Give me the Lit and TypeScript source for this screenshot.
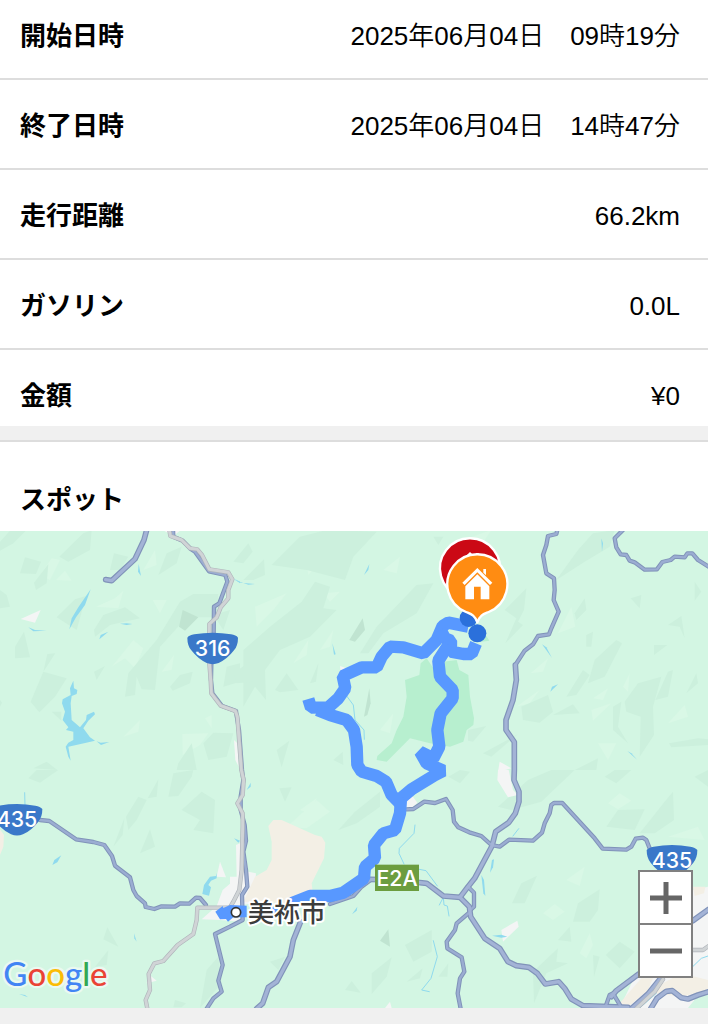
import { LitElement, html, svg, css } from "lit";
import { customElement } from "lit/decorators.js";

// The map is drawn in a 2124 x 1431 space, split in six sheets.
const SHEETS = {
  nw: [0, -3],
  n: [690, -3],
  ne: [1404, -3],
  sw: [0, 717],
  s: [690, 717],
  se: [1404, 717],
} as const;
type Sheet = keyof typeof SHEETS;
type Part = [Sheet, string];

const line = (...parts: Part[]) =>
  parts
    .map(([sheet, points]) =>
      points
        .split(" ")
        .map((p) => {
          const [x, y] = p.split(",").map(Number);
          return `${x + SHEETS[sheet][0]},${y + SHEETS[sheet][1]}`;
        })
        .join(" "),
    )
    .join(" ");

const shift = (sheet: Sheet) => `translate(${SHEETS[sheet][0]} ${SHEETS[sheet][1]})`;

const darkSlopes: Part[] = [
  ["nw", "75,82 123,95 108,132 60,130"],
  ["nw", "0,35 30,2 78,2 40,40 0,62"],
  ["nw", "178,80 250,10 275,0 270,60 205,95"],
  ["nw", "102,158 145,102 140,160 108,180"],
  ["nw", "170,262 225,208 258,198 230,300"],
  ["nw", "282,300 310,255 375,232 420,265 330,285 285,320"],
  ["nw", "0,180 20,195 30,230 0,235"],
  ["nw", "45,385 45,350 72,305 90,382"],
  ["nw", "92,515 130,425 200,445 165,500 118,547"],
  ["nw", "142,372 166,370 130,425"],
  ["nw", "282,425 315,408 290,450"],
  ["nw", "375,500 385,430 470,330 540,215 580,192 655,192 650,262 560,262 480,350 465,480 425,478 410,440 405,495"],
  ["nw", "510,470 540,435 578,425 570,460 518,482"],
  ["nw", "330,120 342,70 385,80 360,120"],
  ["nw", "475,135 500,70 545,50 530,100"],
  ["nw", "155,545 184,545 184,572"],
  ["nw", "0,510 6,518 0,530"],
  ["nw", "680,410 720,400 720,455 670,470"],
  ["nw", "535,700 575,640 590,720 530,720"],
  ["nw", "610,640 640,608 700,610 680,680 625,690"],
  ["nw", "100,715 140,695 172,720"],
  ["nw", "640,255 690,240 670,300"],
  ["n", "125,105 210,20 290,0 440,5 370,80 345,150 230,120"],
  ["n", "10,95 55,40 68,65 40,100"],
  ["n", "40,150 102,88 105,135 70,150"],
  ["n", "40,360 120,290 215,215 255,155 300,170 280,235 320,240 240,320 150,360 105,420 108,510 75,470 40,530"],
  ["n", "10,430 60,395 70,455 20,460"],
  ["n", "390,370 440,290 560,165 610,160 560,250 460,310 415,370"],
  ["n", "135,480 170,430 205,480 150,487"],
  ["n", "240,460 265,400 258,455"],
  ["n", "140,660 178,632 155,712"],
  ["n", "310,690 338,665 340,705"],
  ["n", "610,20 640,20 625,45"],
  ["ne", "110,240 175,175 168,240 150,275 165,285 112,340 145,265"],
  ["ne", "265,150 330,60 375,10 440,0 425,50 350,95"],
  ["ne", "320,250 350,205 355,240 325,270"],
  ["ne", "355,315 375,305 370,350 355,350"],
  ["ne", "295,500 345,420 365,435 325,495"],
  ["ne", "360,460 380,390 445,330 462,340 410,440"],
  ["ne", "160,530 240,495 255,545 215,578 165,570"],
  ["ne", "255,555 315,523 335,550"],
  ["ne", "435,530 460,515 450,590 480,640 435,600"],
  ["ne", "470,515 510,460 580,440 555,530 558,615 515,680 518,560 475,545"],
  ["ne", "562,510 600,425 615,420 600,500"],
  ["ne", "600,285 640,258 650,325 635,290"],
  ["ne", "488,205 520,195 515,235"],
  ["ne", "680,155 700,185 680,212"],
  ["ne", "558,345 598,345 558,375"],
  ["ne", "603,640 690,625 720,628 720,645 610,652"],
  ["ne", "0,600 55,588 15,635 0,632"],
  ["ne", "45,670 150,612 70,680"],
  ["ne", "320,720 390,685 385,720"],
  ["ne", "655,490 685,430 690,460"],
  ["sw", "85,25 110,0 175,0 120,38"],
  ["sw", "378,140 415,80 440,90 410,150 385,180"],
  ["sw", "340,230 373,145 368,195"],
  ["sw", "420,250 450,178 465,230"],
  ["sw", "545,120 605,65 645,90 640,190 580,180 600,150"],
  ["sw", "505,80 520,10 580,0 575,20 535,78"],
  ["sw", "443,85 475,28 470,80"],
  ["sw", "310,508 322,472 355,530"],
  ["sw", "285,590 325,540 320,585"],
  ["sw", "600,714 620,600 655,560 665,640"],
  ["sw", "525,690 558,700 545,712 520,712"],
  ["s", "148,55 185,52 165,95"],
  ["s", "325,180 375,125 450,65 450,110 380,160"],
  ["s", "525,525 605,480 605,545 550,575"],
  ["s", "425,610 485,562 470,620 425,672"],
  ["s", "345,660 365,633 392,668"],
  ["s", "120,575 165,560 145,600"],
  ["s", "530,635 578,595 570,625"],
  ["s", "625,620 655,580 652,620"],
  ["s", "655,20 690,0 720,5 690,40"],
  ["se", "90,110 180,30 250,0 320,0 220,95 130,120"],
  ["se", "415,170 450,120 530,118 500,180"],
  ["se", "515,190 590,95 615,65 618,150 560,190"],
  ["se", "132,400 160,340 207,317 170,400"],
  ["se", "315,455 330,400 395,358 390,420 365,455"],
  ["se", "413,555 455,515 500,545 455,595"],
  ["se", "195,605 270,535 265,575 300,580 235,610 198,700"],
  ["se", "375,555 395,560 378,620"],
  ["se", "410,20 440,0 490,0 445,40"],
  ["se", "680,20 720,0 720,50"],
  ["se", "270,510 305,470 310,515"],
];

const lightSlopes: Part[] = [
  ["nw", "120,135 155,85 180,90 150,150"],
  ["nw", "288,230 345,205 370,182 355,235"],
  ["nw", "168,150 195,122 215,152"],
  ["nw", "458,210 500,210 480,250"],
  ["nw", "335,410 400,330 430,355 405,415 375,385"],
  ["nw", "485,425 522,375 515,420"],
  ["nw", "547,612 625,610 600,645 548,675"],
  ["nw", "370,620 420,570 415,605"],
  ["nw", "430,120 465,60 470,105"],
  ["nw", "615,565 635,555 635,595"],
  ["n", "75,230 170,190 130,240 80,290"],
  ["n", "225,70 265,100 235,135"],
  ["n", "460,120 510,80 500,130"],
  ["n", "190,400 235,330 230,375"],
  ["n", "280,190 330,185 300,215"],
  ["n", "450,600 490,550 480,610"],
  ["n", "270,360 310,300 300,350"],
  ["ne", "270,310 310,230 322,290"],
  ["ne", "188,430 240,385 225,425"],
  ["ne", "145,530 215,480 185,520"],
  ["ne", "370,540 430,520 375,572"],
  ["ne", "375,505 420,475 405,510"],
  ["ne", "390,640 445,640 420,690"],
  ["ne", "600,580 650,525 660,560"],
  ["ne", "465,470 485,430 480,485"],
  ["ne", "0,25 70,0 50,30"],
  ["s", "170,170 260,90 300,125 230,175"],
  ["s", "210,120 260,85 240,130"],
  ["se", "295,330 350,290 335,348"],
  ["se", "225,430 260,402 290,425 255,450"],
  ["se", "420,100 455,70 490,92 450,118"],
  ["se", "335,550 365,490 375,525 355,565"],
  ["se", "600,200 690,170 710,210"],
];

const peaks: Part[] = [
  ["nw", "548,240 595,262 555,302 537,290"],
  ["n", "358,330 398,265 405,300 375,335"],
  ["n", "402,560 418,475 422,520 412,555"],
  ["s", "450,512 475,478 480,530"],
];

const paleGround: Part[] = [
  ["nw", "62,267 122,240 105,278"],
  ["nw", "492,2 540,2 520,18"],
  ["nw", "702,630 712,640 716,710 706,690"],
  ["n", "330,408 350,415 332,425"],
  ["ne", "95,695 130,715 90,725"],
  ["se", "90,0 122,0 135,60 150,75 120,82 88,30"],
  ["s", "530,80 545,75 562,98 545,115 528,110"],
  ["se", "100,480 148,452 152,470 105,515"],
  ["sw", "660,275 678,322 650,320"],
  ["sw", "605,448 650,408 668,360 720,315 720,455 660,450"],
  ["s", "0,320 20,320 18,225 40,215 55,305 78,310 72,400 0,410"],
  ["sw", "445,612 470,632 440,640"],
  ["s", "465,714 480,695 485,714"],
  ["se", "675,360 720,350 720,640 660,714 455,714 500,620 675,610"],
];

const sand: Part[] = [
  ["s", "115,168 130,150 155,150 255,195 275,200 286,218 282,265 245,340 248,365 190,385 170,400 40,395 75,320 110,300 125,270 125,215"],
  ["se", "675,350 712,350 708,370 680,378"],
  ["se", "455,700 520,625 555,625 540,660 480,710"],
  ["se", "585,640 640,610 720,630 720,660 640,680 560,670"],
  ["sw", "0,178 12,195 10,230 0,255"],
];

const park: Part[] = [
  ["n", "525,450 568,435 572,400 590,385 620,430 640,395 680,390 688,420 715,435 720,500 732,565 730,585 710,600 700,635 660,650 600,640 540,625 470,695 440,690 442,678 485,640 500,600 520,560 530,500"],
  ["ne", "40,335 55,318 64,332"],
];

const lakes: Part[] = [
  ["nw", "220,452 222,475 232,480 230,492 215,498 212,520 215,570 240,592 258,570 260,555 282,545 285,553 265,572 250,595 270,622 285,632 252,640 205,650 212,692 205,680 197,650 205,638 220,630 220,605 198,600 205,592 188,570 195,545 186,520 188,508 212,495 210,475"],
  ["nw", "290,634 302,638 328,636 303,645"],
  ["sw", "607,372 612,345 630,320 648,318 650,308 650,325 633,332 625,345 633,352 627,377"],
  ["nw", "208,298 215,265 235,232 272,178 255,225 228,262"],
  ["nw", "298,328 302,315 325,305"],
  ["nw", "416,102 423,138 414,125"],
  ["nw", "85,292 105,300 140,302 100,304"],
  ["nw", "360,281 380,280 397,282 380,285"],
  ["nw", "700,145 720,155 720,160"],
  ["n", "8,148 32,158 75,162 55,164"],
  ["n", "402,135 418,102 415,120"],
  ["n", "307,340 317,373 312,374"],
  ["ne", "400,25 405,40 402,65"],
  ["ne", "222,343 235,352 252,384"],
  ["ne", "247,485 252,470 270,463"],
  ["ne", "478,663 490,670 508,690"],
  ["sw", "157,285 163,270 184,256 172,277"],
  ["sw", "402,490 410,515 403,505"],
  ["sw", "57,672 75,675 84,682"],
  ["s", "50,60 62,38 62,50"],
  ["s", "366,433 382,410 380,422"],
  ["se", "66,308 72,270 78,268 75,292"],
  ["se", "40,315 48,330 52,378 46,370"],
  ["se", "72,497 100,494 118,500 100,503"],
  ["s", "12,205 30,212 25,218"],
];

const streams = [
  line(["s", "555,165 552,190 508,235 507,250 522,282"]),
  line(["s", "568,298 588,302 622,348"]),
  line(["s", "628,405 640,382 642,405 652,408 657,438"]),
  line(["s", "610,512 622,560 603,625 575,660 598,665"]),
  line(["n", "350,498 370,525 375,570 402,600 403,628"]),
  line(["sw", "74,68 75,105"]),
  line(["se", "135,198 152,176"]),
  line(["se", "515,714 565,670"]),
  line(["se", "672,592 700,565 720,558"]),
];

const roads = [
  line(["nw", "519,0 520,20 548,32 570,55 585,65 627,124 676,135 682,155 658,220 642,230 641,310 634,400 633,450 637,490 665,527 708,543"]),
  line(
    ["n", "18,545 27,600 36,720"],
    ["s", "40,30 32,80 32,120 44,165 48,212 40,245 48,300 52,350 36,375 38,450 0,470"],
    ["sw", "645,492 668,585 655,632 665,665 640,685 620,716"],
  ),
  line(["sw", "120,150 148,153 228,208 280,216 313,225 336,258 345,287 390,322 400,360 410,378 435,400 437,411 463,417 485,409 525,410 540,400 568,401 588,383 600,384 618,405"]),
  line(
    ["s", "530,118 550,117 583,95 615,99 648,87 668,120 672,155 685,172 718,187"],
    ["se", "40,198 70,225 95,230 123,209 195,212 222,188 230,160 245,130 250,105 258,99 283,99 380,205 404,236 475,239 490,230 503,206 525,203 535,210 545,235"],
  ),
  line(["ne", "268,0 265,12 240,18 235,45 225,75 235,130 258,145 260,180 257,210 272,245 250,295 243,313 210,318 195,343 170,362 142,405"]),
  line(["se", "0,350 18,368 18,410 5,422"]),
  line(["s", "715,430 680,460 675,480 650,515 652,535 695,562 703,605 690,625 683,670 692,716"]),
  line(["ne", "465,0 440,25 445,52 458,73 475,75 485,92 500,97 530,119 567,118 583,96 608,90 620,80 650,82 658,70 673,70 690,90 722,110"]),
  line(["s", "300,402 370,378 395,350 425,328"]),
  line(["se", "412,712 425,675 435,670 460,712"]),
];

const highways = [
  line(["nw", "440,0 432,30 405,87 335,152 317,149"]),
  line(["s", "212,455 190,510 180,560 140,635 115,652 98,700 80,716"]),
  line(
    ["s", "420,328 500,330 590,340 640,378 690,382 718,410"],
    ["se", "8,440 50,505 95,535 120,575 145,587 183,592 208,610 232,642 272,635 290,655 310,687 345,707 480,712"],
  ),
  line(
    ["ne", "142,405 145,450 135,510 114,570 114,600 139,636 139,720"],
    ["se", "138,30 153,65 153,95 142,130 122,158 83,185 72,228 20,325 0,350"],
    ["s", "690,382"],
  ),
  line(["se", "675,452 722,418"]),
  line(["se", "548,716 567,685 595,664 613,662 640,683 660,687 690,675 722,665"]),
  line(["se", "430,680 445,662 512,612"]),
  line(["se", "490,716 540,672 578,625"]),
];

const railways = [
  line(
    ["nw", "508,0 511,18 545,30 570,55 592,58 606,75 628,118 685,127 697,148 685,180 685,205 662,232 650,262 628,282 628,400 632,450 634,490 662,527 706,543"],
    ["n", "22,560 34,720"],
    ["s", "41,30 38,75 22,100 38,130 38,170 35,300 28,360 10,395"],
    ["sw", "690,412 660,413 592,413 590,450 580,492 533,525 490,573 463,580 446,612 450,660 437,690 442,716"],
  ),
  line(["se", "675,540 705,540 722,528"]),
  line(["se", "505,716 560,665 585,628"]),
];

const route = [
  line(["n", "235,507 243,533 295,532 325,505 346,475 338,438 395,412 440,412 455,380 480,350 520,352 580,370 620,330 638,288 655,278 715,290"]),
  line(["n", "632,300 645,325 663,332 663,365 700,372 725,372 738,340"]),
  line(
    ["n", "655,345 625,392 630,440 668,480 668,505 632,550 622,600 628,650 610,685 570,665 590,700 640,722"],
    ["s", "615,15 545,58 513,85 510,130 495,180 460,190 432,225 435,265 405,290 402,325 340,368 300,378 240,378 185,400"],
  ),
  line(["n", "262,540 300,555 350,570 372,600 380,650 382,705"], ["s", "395,5 440,18 468,35 485,75 510,100"]),
];

const house = svg`<g fill="#fff">
  <path d="M0 -48 L45 -4 L38 3 L0 -35 L-38 3 L-45 -4 Z"/>
  <path d="M0 -29 L36 7 V46 H10 V8 H-10 V46 H-36 V7 Z"/>
  <path d="M18 -45 H26 V-26 L18 -34 Z"/>
</g>`;

const pin = (x: number, y: number, color: string) => svg`
  <g transform="translate(${x} ${y})">
    <path d="M0 115 C-8 92 -20 90 -34 84 A90 90 0 1 1 34 84 C20 90 8 92 0 115 Z" fill=${color} stroke="#fff" stroke-width="7" stroke-linejoin="round"/>
    ${house}
  </g>`;

const shield = (sheet: Sheet, x: number, y: number, label: string) => svg`
  <g transform=${shift(sheet)}>
    <g transform="translate(${x} ${y})">
      <path d="M-76 14 Q-70 6 -55 4 Q0 -6 55 4 Q70 6 76 14 Q76 38 64 52 Q44 78 18 90 Q0 97 -18 90 Q-44 78 -64 52 Q-76 38 -76 14 Z" fill="#3a78c9"/>
      <text class="road-label" x="0" y="68" text-anchor="middle">${label}</text>
    </g>
  </g>`;

const polygons = (parts: Part[], fill: string) =>
  svg`<g fill=${fill}>${parts.map((p) => svg`<polygon points=${line(p)}/>`)}</g>`;
const polylines = (lines: string[], color: string, width: number, join = "round", cap = "round") =>
  svg`<g fill="none" stroke=${color} stroke-width=${width} stroke-linejoin=${join} stroke-linecap=${cap}>
    ${lines.map((l) => svg`<polyline points=${l}/>`)}
  </g>`;

@customElement("drive-map")
export class DriveMap extends LitElement {
  static styles = css`
    :host {
      display: block;
      position: relative;
    }
    .map {
      display: block;
      width: 100%;
      height: auto;
      background: #d3f6e3;
    }
    .road-label {
      font: 500 64px Inter, sans-serif;
      fill: #fff;
    }
    .city {
      font: 500 78px "Noto Sans CJK JP", sans-serif;
      fill: #3c3c3c;
      stroke: #fff;
      stroke-width: 12px;
      stroke-linejoin: round;
      paint-order: stroke;
    }
    .brand {
      font: 500 99px Lato, sans-serif;
      stroke: #eaf9f1;
      stroke-width: 14px;
      stroke-linejoin: round;
      paint-order: stroke;
    }
    .zoom {
      position: absolute;
      right: 15px;
      bottom: 30px;
      display: grid;
      gap: 2px;
      padding: 2px;
      background: #808080;
    }
    .zoom-button {
      display: grid;
      place-items: center;
      width: 51px;
      height: 51px;
      padding: 0;
      border: 0;
      background: #fff;
      cursor: pointer;
    }
    .zoom-icon {
      width: 32px;
      height: 32px;
    }
  `;

  render() {
    return html`
      <svg class="map" viewBox="0 0 2124 1431" role="img" aria-label="走行ルート">
        ${polygons(lightSlopes, "#d9f8e6")} ${polygons(darkSlopes, "#ccf0dd")}
        ${polygons(peaks, "#c0e4d1")} ${polygons(park, "#b7efcf")}
        ${polygons(paleGround, "#f4f5f5")} ${polygons(sand, "#f3efe5")}
        ${polygons(lakes, "#8fdaee")} ${polylines(streams, "#8fdaee", 3)}
        ${polylines(roads, "#8093b9", 13)} ${polylines(highways, "#8093b9", 17)}
        ${polylines(roads, "#9badd2", 7)} ${polylines(highways, "#a3b3d6", 10)}
        ${polylines(railways, "#b0b5bb", 13)} ${polylines(railways, "#d0d4d6", 9)}
        ${polylines(route, "#5898ff", 37, "bevel", "butt")}
        <g transform=${shift("s")}>
          <path d="M-44 425 L-22 408 L-20 414 L0 405 L50 407 V442 H10 L-6 455 L-12 447 L-30 448 Z" fill="#5898ff"/>
          <path d="M120 412 L165 402 L150 450 L128 445 Z" fill="#5898ff"/>
          <circle cx="18" cy="427" r="14" fill="#fff" stroke="#333" stroke-width="5"/>
          <text class="city" x="54" y="456">美祢市</text>
          <rect x="435" y="284" width="132" height="79" fill="#6c9d3f"/>
          <text class="road-label" x="501" y="347" text-anchor="middle">E2A</text>
        </g>
        ${shield("nw", 638, 309, "316")} ${shield("sw", 51, 103, "435")} ${shield("se", 612, 226, "435")}
        <g transform=${shift("n")}>
          <circle cx="716" cy="264" r="27" fill="#2b70db"/>
          <circle cx="742" cy="310" r="27" fill="#2b70db"/>
          ${pin(720, 114, "#cb0915")} ${pin(742, 162, "#ff8c12")}
        </g>
        <g transform=${shift("sw")}>
          <text class="brand" x="10" y="649"><tspan fill="#4285f4">G</tspan><tspan fill="#ea4335">o</tspan><tspan fill="#fbbc05">o</tspan><tspan fill="#4285f4">g</tspan><tspan fill="#34a853">l</tspan><tspan fill="#ea4335">e</tspan></text>
        </g>
      </svg>
      <div class="zoom">
        <button class="zoom-button" type="button" aria-label="拡大">
          <svg class="zoom-icon" viewBox="0 0 32 32"><path d="M0 16H32M16 0V32" stroke="#666" stroke-width="5"/></svg>
        </button>
        <button class="zoom-button" type="button" aria-label="縮小">
          <svg class="zoom-icon" viewBox="0 0 32 32"><path d="M0 16H32" stroke="#666" stroke-width="5"/></svg>
        </button>
      </div>
    `;
  }
}

@customElement("app-root")
export class AppRoot extends LitElement {
  static styles = css`
    :host {
      display: block;
      min-height: 100vh;
      background: #f0f0f0;
      color: #000;
      font: 26px/40px "Liberation Sans", "Noto Sans CJK JP", sans-serif;
    }
    .details {
      margin: 0;
      background: #fff;
    }
    .row {
      display: flex;
      justify-content: space-between;
      padding: 26px 28px 22px 20px;
      border-bottom: 2px solid #ddd;
    }
    .row:first-child {
      padding-top: 16px;
    }
    .row:last-child {
      padding-bottom: 10px;
      border-bottom: 0;
    }
    .label,
    .title {
      font-weight: 700;
    }
    .value {
      margin: 0;
      font-weight: 350;
    }
    .spots {
      margin-top: 14px;
      border-top: 2px solid #ddd;
      background: #fff;
    }
    .title {
      margin: 0;
      padding: 38px 20px 11px;
      font-size: 26px;
    }
  `;

  private rows = [
    ["開始日時", "2025年06月04日　09時19分"],
    ["終了日時", "2025年06月04日　14時47分"],
    ["走行距離", "66.2km"],
    ["ガソリン", "0.0L"],
    ["金額", "¥0"],
  ];

  render() {
    return html`
      <dl class="details">
        ${this.rows.map(
          ([label, value]) => html`<div class="row">
            <dt class="label">${label}</dt>
            <dd class="value">${value}</dd>
          </div>`,
        )}
      </dl>
      <section class="spots">
        <h2 class="title">スポット</h2>
        <drive-map></drive-map>
      </section>
    `;
  }
}
